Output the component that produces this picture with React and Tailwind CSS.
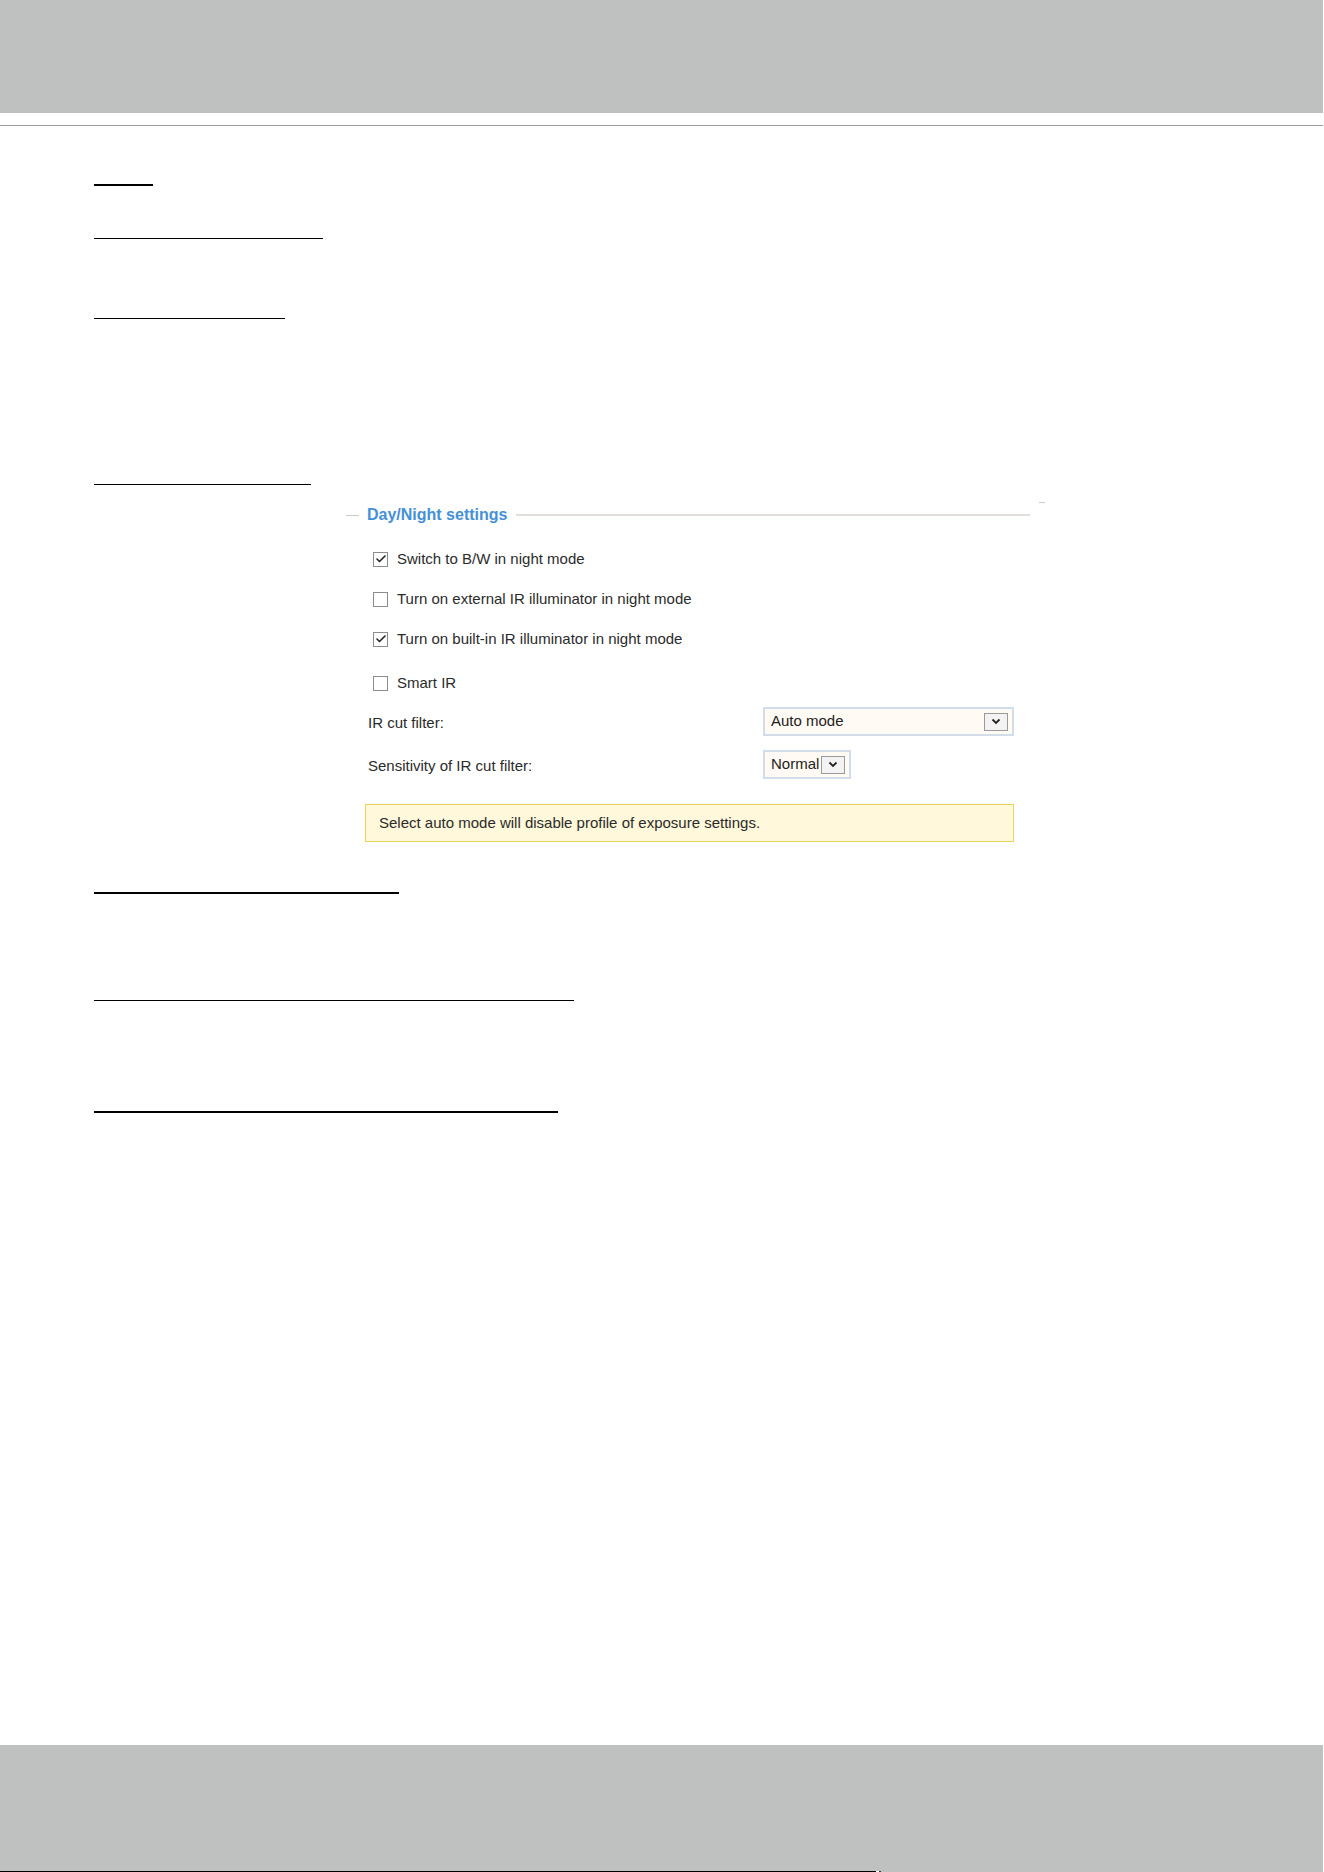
import { Check } from "lucide-react";

const links = {
  top: [
    { w: "w-[59px]", h: "h-[2px]", mt: "mt-[58px]" },
    { w: "w-[229px]", h: "h-px", mt: "mt-[52px]" },
    { w: "w-[191px]", h: "h-px", mt: "mt-[79px]" },
    { w: "w-[217px]", h: "h-px", mt: "mt-[165px]" },
  ],
  bottom: [
    { w: "w-[305px]", h: "h-[2px]", mt: "mt-[50px]" },
    { w: "w-[480px]", h: "h-px", mt: "mt-[106px]" },
    { w: "w-[464px]", h: "h-[2px]", mt: "mt-[110px]" },
  ],
};

const options = [
  { label: "Switch to B/W in night mode", checked: true, mt: "mt-[16px]" },
  { label: "Turn on external IR illuminator in night mode", checked: false, mt: "mt-[16px]" },
  { label: "Turn on built-in IR illuminator in night mode", checked: true, mt: "mt-[16px]" },
  { label: "Smart IR", checked: false, mt: "mt-[20px]" },
];

function LinkLine({ item }) {
  return <div className={`${item.w} ${item.h} ${item.mt} bg-black`} />;
}

function Box({ checked }) {
  return (
    <span className="flex h-[15px] w-[15px] items-center justify-center border border-[#8c8c8c] bg-white">
      {checked ? <Check size={12} strokeWidth={3.2} className="text-[#222]" /> : null}
    </span>
  );
}

function Arrow() {
  return (
    <span className="flex h-[18px] w-[24px] items-center justify-center border border-[#9a9a9a] bg-[#f3f3f3]">
      <svg width="10" height="7" viewBox="0 0 10 7">
        <path d="M1.5 1.5 L5 5 L8.5 1.5" fill="none" stroke="#222" strokeWidth="1.8" />
      </svg>
    </span>
  );
}

function Select({ value, wide }) {
  return (
    <div
      className={`flex h-[29px] items-center border-2 border-[#d3ddea] bg-[#fffaf3] pl-[6px] pr-[4px] ${
        wide ? "w-[251px] justify-between" : "gap-[2px]"
      }`}
    >
      <span className="text-[15px] text-[#222]">{value}</span>
      <Arrow />
    </div>
  );
}

function DayNight() {
  return (
    <div className="ml-[346px] w-[705px]">
      <div className="flex h-[32px] items-center">
        <span className="h-px w-[13px] bg-[#cfcac6]" />
        <span className="ml-[8px] text-[16px] font-bold text-[#4690d8]">Day/Night settings</span>
        <span className="ml-[9px] h-[2px] w-[514px] bg-[#e2deda]" />
        <span className="ml-[9px] mt-[3px] h-px w-[6px] self-start bg-[#cfcac6]" />
      </div>

      <div className="w-[668px] pl-[19px] text-[15px] text-[#2b2b2b]">
        {options.map((o) => (
          <div key={o.label} className={`flex h-[24px] items-center gap-[9px] pl-[8px] ${o.mt}`}>
            <Box checked={o.checked} />
            <span>{o.label}</span>
          </div>
        ))}

        <div className="mt-[12px] flex h-[29px] items-center justify-between pl-[3px]">
          <span className="pt-[4px]">IR cut filter:</span>
          <Select value="Auto mode" wide />
        </div>
        <div className="mt-[14px] flex h-[29px] items-center pl-[3px]">
          <span className="w-[395px] pt-[4px]">Sensitivity of IR cut filter:</span>
          <Select value="Normal" />
        </div>

        <div className="mt-[25px] flex h-[38px] items-center border border-[#ead35c] bg-[#fff8da] pl-[13px]">
          Select auto mode will disable profile of exposure settings.
        </div>
      </div>
    </div>
  );
}

export default function App() {
  return (
    <div className="flex min-h-[1872px] flex-col bg-white font-['Liberation_Sans',Arial,sans-serif]">
      <div className="h-[113px] w-[1323px] bg-[#bfc1c0]" />
      <div className="mt-[12px] h-px w-[1323px] bg-[#9c9c9c]" />

      <div className="pl-[94px]">
        {links.top.map((l, i) => (
          <LinkLine key={i} item={l} />
        ))}
      </div>

      <div className="mt-[14px]">
        <DayNight />
      </div>

      <div className="pl-[94px]">
        {links.bottom.map((l, i) => (
          <LinkLine key={i} item={l} />
        ))}
      </div>

      <div className="mt-auto w-[1323px]">
        <div className="h-[126px] bg-[#bfc1c0]" />
        <div className="flex h-px">
          <span className="w-[876px] bg-black" />
          <span className="w-[3px] bg-white" />
          <span className="w-[2px] bg-[#5b2a2a]" />
          <span className="flex-1 bg-[#bfc1c0]" />
        </div>
      </div>
    </div>
  );
}
